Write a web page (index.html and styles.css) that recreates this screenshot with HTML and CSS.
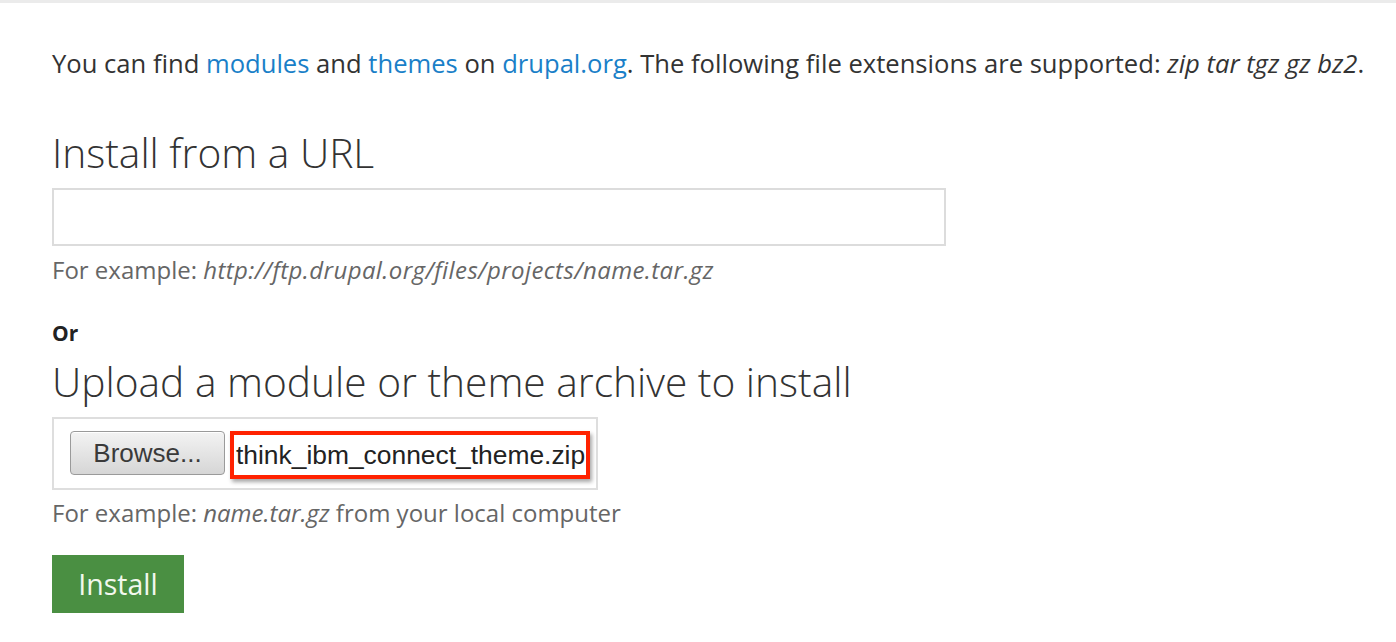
FILE: index.html
```html
<!DOCTYPE html>
<html lang="en">
<head>
<meta charset="utf-8">
<title>Install new module or theme</title>
<link rel="stylesheet" href="styles.css">
</head>
<body>
<div class="topbar"></div>
<main class="content">
  <p class="intro">You can find <a href="#">modules</a> and <a href="#">themes</a> on <a href="#">drupal.org</a>. The following file extensions are supported: <em>zip tar tgz gz bz2</em>.</p>

  <h2 class="heading heading-url">Install from a URL</h2>
  <input class="url-input" type="text">
  <div class="desc desc-url">For example: <em>http://ftp.drupal.org/files/projects/name.tar.gz</em></div>

  <div class="or">Or</div>
  <h2 class="heading heading-upload">Upload a module or theme archive to install</h2>
  <div class="file-box">
    <span class="browse">Browse...</span>
    <span class="file-name">think_ibm_connect_theme.zip</span>
  </div>
  <div class="desc desc-upload">For example: <em>name.tar.gz</em> from your local computer</div>

  <button class="install" type="button">Install</button>
</main>
</body>
</html>
```

FILE: styles.css
```css
html, body {
  margin: 0;
  padding: 0;
  background: #ffffff;
}

body {
  font-family: "Open Sans", "DejaVu Sans", sans-serif;
  color: #333333;
}

.topbar {
  height: 3px;
  background: #ebebeb;
}

.content {
  padding: 43px 0 0 52px;
  display: flex;
  flex-direction: column;
  align-items: flex-start;
}

.intro {
  margin: 0;
  font-size: 25.6px;
  line-height: 36px;
  white-space: nowrap;
}

.intro a {
  color: #1a7fc8;
  text-decoration: none;
}

.heading {
  margin: 0;
  font-size: 40.7px;
  line-height: 50px;
  font-weight: 300;
  color: #333333;
}

.heading-url {
  margin-top: 45px;
}

.url-input {
  margin: 11px 0 0 0;
  box-sizing: border-box;
  width: 894px;
  height: 58px;
  border: 2px solid #dcdcdc;
  padding: 0;
  background: #fff;
}

.desc {
  font-size: 24px;
  line-height: 32px;
  color: #666666;
}

.desc-url em {
  letter-spacing: 0.4px;
}

.desc-url {
  margin-top: 8px;
}

.or {
  margin-top: 32px;
  font-size: 21px;
  line-height: 30px;
  font-weight: 700;
  color: #222222;
}

.heading-upload {
  margin-top: 8px;
}

.file-box {
  margin-top: 11px;
  box-sizing: border-box;
  width: 546px;
  height: 73px;
  border: 2px solid #dedede;
  display: flex;
  align-items: center;
  padding: 0 0 0 16px;
  gap: 5px;
  font-family: "Liberation Sans", Arial, sans-serif;
}

.browse {
  box-sizing: border-box;
  width: 155px;
  height: 44px;
  border: 1px solid #9a9a9a;
  border-radius: 4px;
  background: linear-gradient(#f3f3f3, #d6d6d6);
  box-shadow: inset 0 1px 0 #ffffff;
  font-size: 26px;
  color: #3a3a3a;
  display: flex;
  align-items: center;
  justify-content: center;
  margin-top: -1px;
}

.file-name {
  box-sizing: border-box;
  height: 48px;
  border: 4px solid #ff2200;
  box-shadow: 2px 3px 4px rgba(0, 0, 0, 0.35);
  padding: 0 1px 0 2px;
  font-size: 26.4px;
  line-height: 40px;
  color: #222222;
  margin-top: 2px;
}

.desc-upload {
  margin-top: 7px;
}

.install {
  margin-top: 26px;
  width: 132px;
  height: 58px;
  border: 0;
  padding: 0;
  background: #4a8f42;
  color: #f2f8ee;
  font-family: "Open Sans", sans-serif;
  font-size: 28.5px;
}
```
